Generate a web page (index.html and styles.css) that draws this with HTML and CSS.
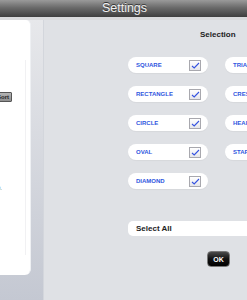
FILE: index.html
```html
<!DOCTYPE html>
<html lang="en">
<head>
    <meta charset="UTF-8">
    <meta name="viewport" content="width=device-width, initial-scale=1.0">
    <title>Settings</title>
    <link rel="stylesheet" href="styles.css">
</head>
<body>

<div class="topbar">Settings</div>

<div class="screen">
    <div class="side">
        <div class="side-panel">
            <button class="side-btn">Sort</button>
            <p class="side-note">1.0.</p>
        </div>
    </div>

    <div class="main">
        <h2 class="heading">Selection</h2>

        <div class="shapes">
            <div class="shape"><span>SQUARE</span><i class="check"></i></div>
            <div class="shape"><span>TRIANGLE</span><i class="check"></i></div>
            <div class="shape"><span>RECTANGLE</span><i class="check"></i></div>
            <div class="shape"><span>CRESCENT</span><i class="check"></i></div>
            <div class="shape"><span>CIRCLE</span><i class="check"></i></div>
            <div class="shape"><span>HEART</span><i class="check"></i></div>
            <div class="shape"><span>OVAL</span><i class="check"></i></div>
            <div class="shape"><span>STAR</span><i class="check"></i></div>
            <div class="shape"><span>DIAMOND</span><i class="check"></i></div>
        </div>

        <div class="select-all">Select All</div>

        <button class="ok">OK</button>
    </div>
</div>

<script>
    // drop the same tick into every checkbox
    const tick = '<svg width="12" height="11" viewBox="0 0 12 11"><path d="M3 6 L5.2 8 L10 3" fill="none" stroke="#3553e0" stroke-width="1.1"/></svg>';
    document.querySelectorAll(".check").forEach((box) => {
        box.innerHTML = tick;
    });
</script>

</body>
</html>
```

FILE: styles.css
```css
html, body {
    overflow: hidden;
}

body {
    margin: 0;
    width: 247px;
    height: 300px;
    font-family: 'Liberation Sans', Arial, sans-serif;
    background-color: #dfe1e5;
}

.topbar {
    height: 17px;
    line-height: 17px;
    text-align: center;
    font-size: 12.5px;
    color: #f2f2f2;
    text-shadow: 0 -1px 0 #333;
    background: linear-gradient(#9a9a9a, #6a6a6a 45%, #3e3e3e);
    border-bottom: 3px solid #d9dadc;
    padding-left: 2px;
}

.screen {
    display: flex;
    height: 280px;
}

.side {
    width: 44px;
    flex-shrink: 0;
    background: linear-gradient(#e7e8eb, #c4c8d2);
    border-right: 1px solid #d3d6dc;
    box-sizing: border-box;
}

.side-panel {
    width: 31px;
    height: 255px;
    background-color: #ffffff;
    border-radius: 0 5px 6px 0;
    position: relative;
    overflow: hidden;
    border-right: 1px solid #eef0f3;
    box-sizing: border-box;
}

.side-panel::after {
    content: "";
    position: absolute;
    left: 25px;
    top: 40px;
    bottom: 20px;
    width: 1px;
    background-color: #f1f1f3;
}

.side-btn {
    display: block;
    margin: 72px 0 0 -14px;
    width: 26px;
    height: 10px;
    padding: 0 2px 0 0;
    font-family: 'Liberation Sans', Arial, sans-serif;
    font-size: 6px;
    font-weight: bold;
    text-align: right;
    color: #222;
    background: linear-gradient(#b4b4b4, #8e8e8e);
    border: 1px solid #555;
    border-radius: 1px;
}

.side-note {
    margin: 83px 0 0 -8px;
    font-size: 6px;
    color: #444;
}

.main {
    flex: 1;
    padding-left: 84px;
    background-color: #dfe1e5;
}

.heading {
    margin: 10px 0 0 72px;
    font-size: 8px;
    font-weight: bold;
    color: #222;
    height: 10px;
    line-height: 10px;
}

.shapes {
    display: grid;
    grid-template-columns: 80px 80px;
    column-gap: 17px;
    row-gap: 13px;
    margin-top: 17px;
    width: 200px;
}

.shape {
    height: 16px;
    display: flex;
    align-items: center;
    justify-content: space-between;
    padding: 0 7px 0 8px;
    background-color: #ffffff;
    border-radius: 8px;
    box-shadow: 0 1px 1px rgba(0, 0, 0, 0.04);
    font-size: 6px;
    font-weight: bold;
    color: #2f56e0;
    white-space: nowrap;
}

.check {
    display: block;
    width: 12px;
    height: 11px;
    box-sizing: border-box;
    border: 1px solid #a8a8ae;
    background: linear-gradient(#ffffff, #e6e6ea);
}

.check svg {
    display: block;
    margin: -1px 0 0 -1px;
}

.select-all {
    margin-top: 32px;
    width: 200px;
    height: 15px;
    line-height: 15px;
    padding-left: 8px;
    background-color: #ffffff;
    border-radius: 5px;
    font-size: 8px;
    font-weight: bold;
    color: #222;
}

.ok {
    display: block;
    margin: 15px 0 0 79px;
    width: 23px;
    height: 16px;
    padding: 0;
    font-family: 'Liberation Sans', Arial, sans-serif;
    font-size: 7px;
    font-weight: bold;
    color: #ffffff;
    background: linear-gradient(#4a4a4a, #111 50%, #000);
    border: 1px solid #777;
    border-radius: 4px;
}
```
